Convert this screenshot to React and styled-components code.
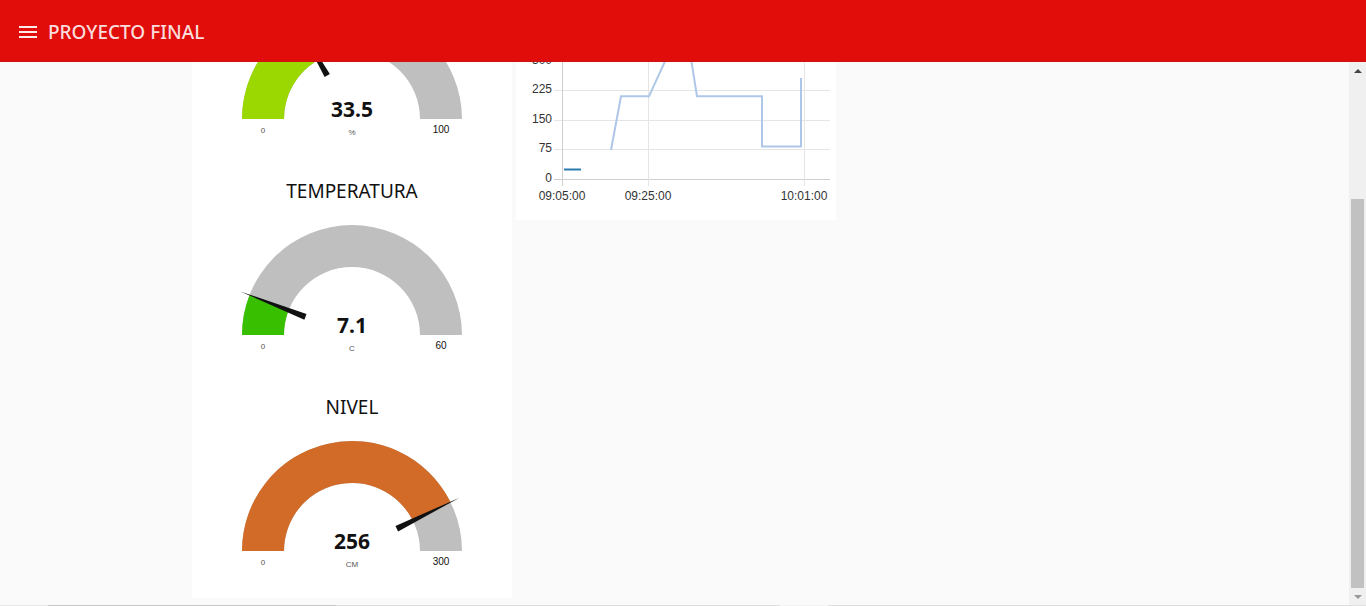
import React from "react";
import styled, { createGlobalStyle } from "styled-components";

const Global = createGlobalStyle`
  * { box-sizing: border-box; }
  body { margin: 0; background: #fafafa; font-family: "Noto Sans", "Open Sans", sans-serif; color: #111; }
`;

const Page = styled.div`
  height: 100vh;
  display: flex;
  flex-direction: column;
  overflow: hidden;
`;

const Toolbar = styled.header`
  flex: none;
  height: 62px;
  padding: 2px 16px 0;
  display: flex;
  align-items: center;
  gap: 8px;
  background: #e00d0b;
  color: #fbdcdc;
  border-bottom: 1px solid #cb1512;
  z-index: 1;
`;

const MenuButton = styled.button`
  width: 24px;
  height: 24px;
  padding: 0;
  border: 0;
  background: none;
  color: #fdeaea;
  svg { display: block; }
`;

const PageTitle = styled.h1`
  margin: 0;
  font-size: 19px;
  line-height: 28px;
  font-weight: 500;
`;

const Body = styled.div`
  flex: 1;
  min-height: 0;
  display: flex;
`;

const Content = styled.main`
  flex: 1;
  min-width: 0;
  overflow: hidden;
  display: flex;
  flex-direction: column;
  justify-content: flex-end;
  padding: 0 0 7px 192px;
`;

const Groups = styled.div`
  flex: none;
  display: flex;
  align-items: flex-start;
  gap: 4px;
`;

const Card = styled.section`
  width: 320px;
  background: #fff;
`;

const GaugeBox = styled.div`
  height: 216px;
`;

const GaugeTitle = styled.h2`
  margin: 0;
  height: 50px;
  font-size: 19px;
  line-height: 50px;
  font-weight: 400;
  text-align: center;
`;

const Drawing = styled.svg`
  display: block;
  width: 100%;
`;

const ValueText = styled.text`
  font: 700 21px "Noto Sans", "Open Sans", sans-serif;
  fill: #111;
  text-anchor: middle;
`;

const SmallText = styled.text`
  font: 8px "Liberation Sans", Arial, sans-serif;
  fill: #555;
  text-anchor: middle;
`;

const MaxText = styled.text`
  font: 10px "Liberation Sans", Arial, sans-serif;
  fill: #111;
  text-anchor: middle;
`;

const AxisText = styled.text`
  font: 12px "Liberation Sans", Arial, sans-serif;
  fill: #333;
  text-anchor: ${(p) => p.$anchor};
`;

const Scrollbar = styled.div`
  flex: none;
  width: 17px;
  padding: 0 2px;
  display: flex;
  flex-direction: column;
  background: #f0f0f0;
`;

const ScrollButton = styled.button`
  height: 17px;
  padding: 0;
  border: 0;
  background: none;
  color: ${(p) => (p.$muted ? "#999" : "#444")};
  svg { display: block; margin: 0 auto; }
`;

const Track = styled.div`
  flex: 1;
  display: flex;
  flex-direction: column;
`;

const TrackGap = styled.div`
  flex: 120;
`;

const Thumb = styled.div`
  flex: 389;
  background: #c1c1c1;
`;

const StatusLine = styled.footer`
  flex: none;
  height: 1px;
  display: flex;
  background: #dedede;
`;

const StatusPart = styled.div`
  width: ${(p) => p.$width}px;
  background: ${(p) => p.$color};
`;

const CX = 160;
const CY = 119;
const OUTER = 110;
const INNER = 68;

function point(radius, angle, side = 0) {
  const x = CX - radius * Math.cos(angle) + side * Math.sin(angle);
  const y = CY - radius * Math.sin(angle) - side * Math.cos(angle);
  return `${x.toFixed(2)} ${y.toFixed(2)}`;
}

function band(from, to) {
  return `M${point(OUTER, from)}A${OUTER} ${OUTER} 0 0 1 ${point(OUTER, to)}L${point(INNER, to)}A${INNER} ${INNER} 0 0 0 ${point(INNER, from)}Z`;
}

function Gauge({ title, value, max, unit, color }) {
  const angle = (Math.PI * value) / max;
  return (
    <GaugeBox>
      <GaugeTitle as={title ? "h2" : "div"}>{title}</GaugeTitle>
      <Drawing viewBox="0 0 320 160" role="img">
        <path d={band(0, Math.PI)} fill="#bfbfbf" />
        <path d={band(0, angle)} fill={color} />
        <path d={`M${point(50, angle, -3)}L${point(120, angle)}L${point(50, angle, 3)}Z`} fill="#111" />
        <ValueText x="160" y="117">{value}</ValueText>
        <SmallText x="160" y="135">{unit}</SmallText>
        <SmallText x="71" y="133">0</SmallText>
        <MaxText x="249" y="133">{max}</MaxText>
      </Drawing>
    </GaugeBox>
  );
}

const gauges = [
  { value: 33.5, max: 100, unit: "%", color: "#9bd700" },
  { title: "TEMPERATURA", value: 7.1, max: 60, unit: "C", color: "#38c000" },
  { title: "NIVEL", value: 256, max: 300, unit: "CM", color: "#d16b27" },
];

const rows = [
  { label: "300", y: 111 },
  { label: "225", y: 140 },
  { label: "150", y: 170 },
  { label: "75", y: 199 },
  { label: "0", y: 229 },
];

const columns = [
  { label: "09:05:00", x: 46 },
  { label: "09:25:00", x: 132 },
  { label: "10:01:00", x: 288 },
];

function Chart() {
  return (
    <Drawing viewBox="0 0 320 270" role="img">
      {rows.map((r) => (
        <g key={r.label}>
          <path d={`M38 ${r.y + 0.5}H314`} stroke={r.label === "0" ? "#cfcfcf" : "#e5e5e5"} />
          <AxisText $anchor="end" x="36" y={r.y + 3}>{r.label}</AxisText>
        </g>
      ))}
      {columns.map((c, i) => (
        <g key={c.label}>
          <path d={`M${c.x + 0.5} 90V236`} stroke={i === 0 ? "#cfcfcf" : "#e5e5e5"} />
          <AxisText $anchor="middle" x={c.x} y="250">{c.label}</AxisText>
        </g>
      ))}
      <path d="M48 219.5H65" stroke="#2b7bb0" strokeWidth="2" />
      <path
        d="M95 200L105 146.3H133L156 96H173L181 146.3H246V196.5H285V128"
        fill="none"
        stroke="#aec7e8"
        strokeWidth="2"
      />
    </Drawing>
  );
}

export default function App() {
  return (
    <Page>
      <Global />
      <Toolbar>
        <MenuButton aria-label="Menu">
          <svg width="24" height="24" viewBox="0 0 24 24" fill="currentColor">
            <path d="M3 18h18v-2H3v2zm0-5h18v-2H3v2zm0-7v2h18V6H3z" />
          </svg>
        </MenuButton>
        <PageTitle>PROYECTO FINAL</PageTitle>
      </Toolbar>
      <Body>
        <Content>
          <Groups>
            <Card>
              {gauges.map((g) => (
                <Gauge key={g.unit} {...g} />
              ))}
            </Card>
            <Card>
              <Chart />
            </Card>
          </Groups>
        </Content>
        <Scrollbar>
          <ScrollButton aria-label="Up">
            <svg width="8" height="4" viewBox="0 0 8 4" fill="currentColor"><path d="M0 4L4 0L8 4Z" /></svg>
          </ScrollButton>
          <Track>
            <TrackGap />
            <Thumb />
          </Track>
          <ScrollButton $muted aria-label="Down">
            <svg width="8" height="4" viewBox="0 0 8 4" fill="currentColor"><path d="M0 0L4 4L8 0Z" /></svg>
          </ScrollButton>
        </Scrollbar>
      </Body>
      <StatusLine>
        <StatusPart $width={48} $color="#e6e6e6" />
        <StatusPart $width={288} $color="#c8c8c8" />
        <StatusPart $width={444} $color="#dedede" />
        <StatusPart $width={48} $color="#f2f2f2" />
      </StatusLine>
    </Page>
  );
}
